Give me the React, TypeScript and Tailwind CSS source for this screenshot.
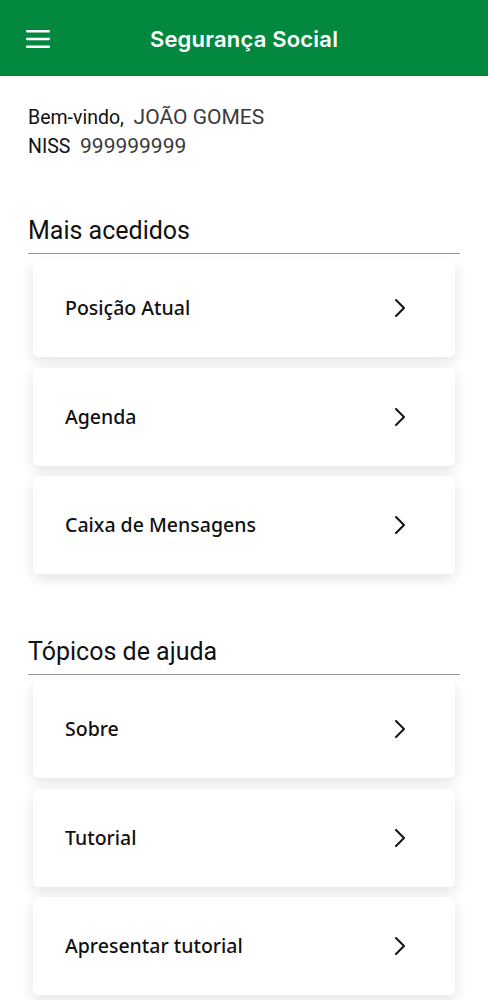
import React from "react";

const Chevron = () => (
  <svg width="14" height="20" viewBox="0 0 14 20" fill="none" className="shrink-0">
    <path d="M3 2 L11 10 L3 18" stroke="#111" strokeWidth="2" strokeLinecap="round" strokeLinejoin="round" />
  </svg>
);

const Card = ({ label }: { label: string }) => (
  <div className="mx-[33px] h-[98px] bg-white rounded-[5px] shadow-[0_5px_14px_rgba(0,0,0,0.11)] flex items-center justify-between pl-[32px] pr-[48px]">
    <span className="text-[19.5px] font-medium text-[#111]" style={{ fontFamily: '"Noto Sans", "Open Sans", sans-serif' }}>{label}</span>
    <Chevron />
  </div>
);

const Section = ({ title, items }: { title: string; items: string[] }) => (
  <div>
    <div className="mx-[28px] border-b border-[#9a9a9a] pb-[7px]">
      <h2 className="text-[25px] text-[#111] leading-[30px]" style={{ fontFamily: 'Roboto, sans-serif' }}>{title}</h2>
    </div>
    <div className="flex flex-col gap-[10.5px] pt-[5px]">
      {items.map((i) => (
        <Card key={i} label={i} />
      ))}
    </div>
  </div>
);

export default function App() {
  return (
    <div className="w-[488px] min-h-[1000px] bg-white overflow-hidden">
      <header className="h-[76px] bg-[#02893f] flex items-center relative">
        <svg width="26" height="20" viewBox="0 0 26 20" className="absolute left-[25px] top-[29px]">
          <rect x="1" y="1" width="24" height="2.4" rx="1" fill="#fff" />
          <rect x="1" y="8.8" width="24" height="2.4" rx="1" fill="#fff" />
          <rect x="1" y="16.6" width="24" height="2.4" rx="1" fill="#fff" />
        </svg>
        <h1 className="w-full text-center text-white text-[22px] font-semibold tracking-[0.2px] pt-[2px]" style={{ fontFamily: 'Inter, "Open Sans", sans-serif' }}>
          Segurança Social
        </h1>
      </header>
      <div className="px-[28px] pt-[27px] text-[19.5px] leading-[28px]" style={{ fontFamily: 'Roboto, sans-serif' }}>
        <div className="text-[#111]">Bem-vindo,&nbsp; <span className="text-[#3a3a3a] text-[21px]">JOÃO GOMES</span></div>
        <div className="text-[#111]">NISS&nbsp; <span className="text-[#3a3a3a] text-[21px]">999999999</span></div>
      </div>
      <div className="pt-[55px]">
        <Section title="Mais acedidos" items={["Posição Atual", "Agenda", "Caixa de Mensagens"]} />
      </div>
      <div className="pt-[63px]">
        <Section title="Tópicos de ajuda" items={["Sobre", "Tutorial", "Apresentar tutorial"]} />
      </div>
    </div>
  );
}
